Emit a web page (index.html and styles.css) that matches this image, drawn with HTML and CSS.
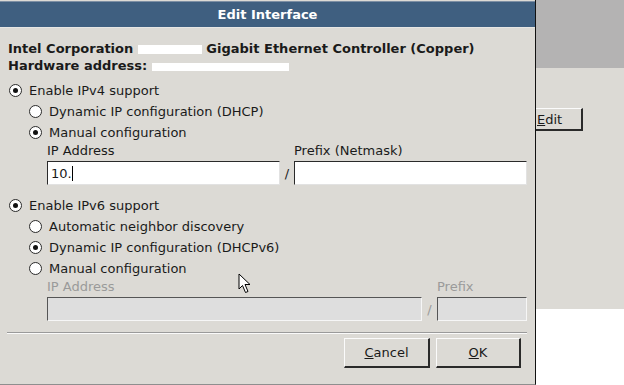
FILE: index.html
```html
<!DOCTYPE html>
<html lang="en">
<head>
    <meta charset="UTF-8">
    <meta name="viewport" content="width=device-width, initial-scale=1.0">
    <title>Edit Interface</title>
    <link rel="stylesheet" href="styles.css">
</head>
<body>
    <div class="screen">
        <div class="dialog">
            <div class="titlebar">Edit Interface</div>
            <div class="content">
                <div class="nic-info">
                    <div>Intel Corporation <span class="redact r1"></span> Gigabit Ethernet Controller (Copper)</div>
                    <div>Hardware address: <span class="redact r2"></span></div>
                </div>

                <div class="option"><span class="radio checked"></span>Enable IPv4 support</div>
                <div class="option sub"><span class="radio"></span>Dynamic IP configuration (DHCP)</div>
                <div class="option sub"><span class="radio checked"></span>Manual configuration</div>
                <div class="fields v4">
                    <div class="label">IP Address</div>
                    <div></div>
                    <div class="label">Prefix (Netmask)</div>
                    <div class="entry">10.<span class="caret"></span></div>
                    <div class="slash">/</div>
                    <div class="entry"></div>
                </div>

                <div class="option v6"><span class="radio checked"></span>Enable IPv6 support</div>
                <div class="option sub"><span class="radio"></span>Automatic neighbor discovery</div>
                <div class="option sub"><span class="radio checked"></span>Dynamic IP configuration (DHCPv6)</div>
                <div class="option sub"><span class="radio"></span>Manual configuration</div>
                <div class="fields v6-fields disabled">
                    <div class="label">IP Address</div>
                    <div></div>
                    <div class="label">Prefix</div>
                    <div class="entry"></div>
                    <div class="slash">/</div>
                    <div class="entry"></div>
                </div>

                <div class="separator"></div>
                <div class="buttons">
                    <button class="btn cancel"><u>C</u>ancel</button>
                    <button class="btn ok"><u>O</u>K</button>
                </div>
            </div>
        </div>
        <div class="behind">
            <div class="behind-top"></div>
            <div class="behind-pane">
                <button class="btn edit"><u>E</u>dit</button>
            </div>
            <div class="behind-bottom"></div>
        </div>
    </div>
    <svg class="pointer" width="14" height="22" viewBox="0 0 14 22">
        <path d="M1 1 L1 16 L4.5 12.5 L7.5 19.5 L10 18.5 L7 11.5 L12 11.5 Z" fill="#fff" stroke="#000" stroke-width="1" stroke-linejoin="miter"/>
    </svg>
</body>
</html>
```

FILE: styles.css
```css
body {
    margin: 0;
    font-family: "DejaVu Sans", sans-serif;
    font-size: 13px;
    color: #1a1a1a;
    background-color: #dcdad5;
}
.screen {
    display: flex;
    width: 624px;
    height: 385px;
    overflow: hidden;
}
.dialog {
    width: 535px;
    flex: none;
    height: 384px;
    background-color: #dcdad5;
    border-right: 1px solid #111;
    border-bottom: 1px solid #8e8e8e;
}
.titlebar {
    height: 25px;
    line-height: 25px;
    margin-top: 1px;
    border-top: 1px solid #7d8fa4;
    border-bottom: 1px solid #e6e6e4;
    background-color: #3f5f80;
    color: #fff;
    font-weight: bold;
    text-align: center;
}
.content {
    padding: 12px 8px 0 8px;
}
.nic-info {
    font-weight: bold;
    line-height: 17px;
    margin-bottom: 6px;
}
.redact {
    display: inline-block;
    background-color: #fff;
    vertical-align: middle;
}
.r1 {
    width: 64px;
    height: 9px;
}
.r2 {
    width: 137px;
    height: 8px;
}
.option {
    display: flex;
    align-items: center;
    height: 21px;
}
.option.sub {
    padding-left: 20px;
}
.option.v6 {
    margin-top: 10px;
}
.radio {
    position: relative;
    width: 11px;
    height: 11px;
    margin: 0 7px 0 1px;
    border: 1px solid #2a2a2a;
    border-radius: 50%;
    background-color: #fff;
    box-sizing: content-box;
}
.radio.checked::after {
    content: "";
    position: absolute;
    left: 3px;
    top: 3px;
    width: 5px;
    height: 5px;
    border-radius: 50%;
    background-color: #111;
}
.fields {
    display: grid;
    grid-template-columns: 233px 14px 233px;
    grid-template-rows: 16px 24px;
    row-gap: 2px;
    margin-left: 39px;
}
.fields.v6-fields {
    grid-template-columns: 375px 15px 90px;
}
.label {
    line-height: 16px;
}
.entry {
    display: flex;
    align-items: center;
    padding-left: 3px;
    background-color: #fff;
    border-top: 1px solid #2a2a2a;
    border-left: 1px solid #2a2a2a;
    border-right: 1px solid #e2e2e2;
    border-bottom: 1px solid #e2e2e2;
}
.caret {
    display: inline-block;
    width: 1px;
    height: 15px;
    background-color: #000;
}
.slash {
    display: flex;
    align-items: center;
    justify-content: center;
}
.disabled .label,
.disabled .slash {
    color: #9a9a9a;
}
.disabled .entry {
    background-color: #dedede;
    border-top-color: #555;
    border-left-color: #555;
    border-right-color: #f6f6f6;
    border-bottom-color: #f6f6f6;
}
.separator {
    height: 1px;
    margin: 11px 0 0 -1px;
    background-color: #9a9a9a;
    border-bottom: 1px solid #fafafa;
}
.buttons {
    display: flex;
    justify-content: flex-end;
    gap: 6px;
    margin-top: 4px;
    padding-right: 6px;
}
.btn {
    font-family: "DejaVu Sans", sans-serif;
    font-size: 13px;
    color: #1a1a1a;
    background-color: #dcdad5;
    height: 30px;
    padding: 0;
    border-top: 1px solid #fbfbfb;
    border-left: 1px solid #fbfbfb;
    border-right: 2px solid #2a2a2a;
    border-bottom: 2px solid #2a2a2a;
}
.btn.cancel {
    width: 86px;
}
.btn.ok {
    width: 85px;
}
.behind {
    flex: 1;
    display: flex;
    flex-direction: column;
}
.behind-top {
    height: 68px;
    background-color: #b4b3b3;
}
.behind-pane {
    height: 241px;
    background-color: #dcdad5;
    padding-top: 40px;
    box-sizing: border-box;
}
.behind-bottom {
    flex: 1;
    background-color: #fff;
}
.btn.edit {
    display: block;
    width: 47px;
    height: 23px;
    text-align: left;
    padding-left: 1px;
    border-left: none;
}
.pointer {
    position: absolute;
    left: 238px;
    top: 273px;
}
```
